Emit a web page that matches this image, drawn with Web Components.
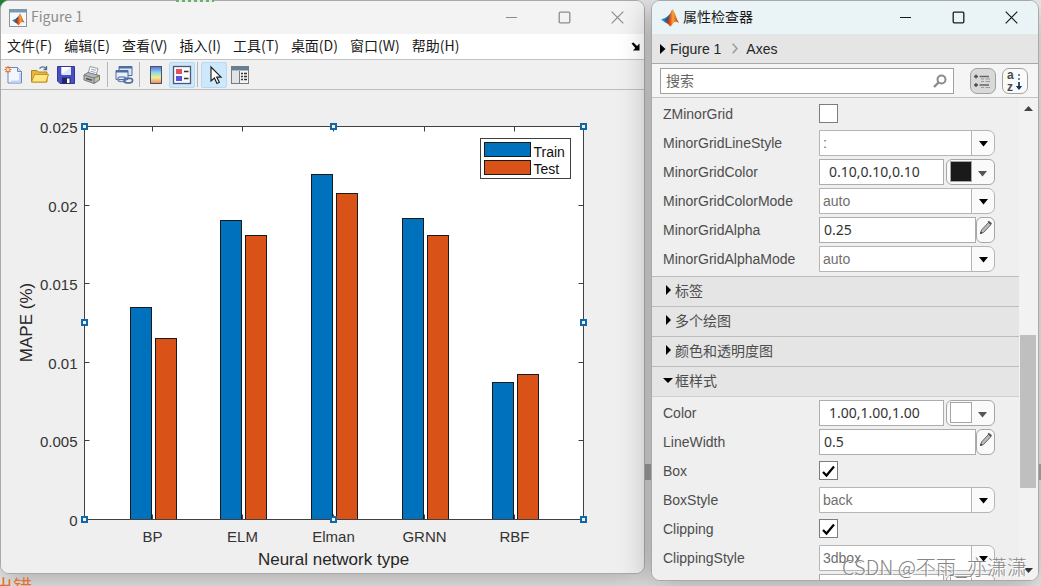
<!DOCTYPE html>
<html lang="zh-CN">
<head>
<meta charset="utf-8">
<meta name="viewport" content="width=device-width, initial-scale=1">
<title>Figure 1</title>
<style>
  html, body { margin: 0; height: 100%; }
  body {
    --ui: "Noto Sans CJK SC", "Noto Sans", sans-serif;
    --plain: "Liberation Sans", "Noto Sans CJK SC", sans-serif;
    font: 14px/20px var(--ui);
    color: #1a1a1a;
  }
</style>
</head>
<body>
<desk-top>
  <app-window class="figure" heading="Figure 1" inactive>
    <matlab-logo slot="icon" framed></matlab-logo>
    <menu-bar items="文件(F)|编辑(E)|查看(V)|插入(I)|工具(T)|桌面(D)|窗口(W)|帮助(H)"></menu-bar>
    <tool-bar></tool-bar>
    <bar-chart></bar-chart>
  </app-window>
  <app-window class="inspector" heading="属性检查器">
    <matlab-logo slot="icon"></matlab-logo>
    <crumb-trail></crumb-trail>
    <search-bar></search-bar>
    <scroll-area>
      <prop-group>
        <prop-row name="ZMinorGrid" kind="check"></prop-row>
        <prop-row name="MinorGridLineStyle" kind="choice" value=":"></prop-row>
        <prop-row name="MinorGridColor" kind="color" value="0.10,0.10,0.10" swatch="#1a1a1a"></prop-row>
        <prop-row name="MinorGridColorMode" kind="choice" value="auto"></prop-row>
        <prop-row name="MinorGridAlpha" kind="number" value="0.25"></prop-row>
        <prop-row name="MinorGridAlphaMode" kind="choice" value="auto"></prop-row>
      </prop-group>
      <prop-header>标签</prop-header>
      <prop-header>多个绘图</prop-header>
      <prop-header>颜色和透明度图</prop-header>
      <prop-header open>框样式</prop-header>
      <prop-group>
        <prop-row name="Color" kind="color" value="1.00,1.00,1.00" swatch="#ffffff"></prop-row>
        <prop-row name="LineWidth" kind="number" value="0.5"></prop-row>
        <prop-row name="Box" kind="check" checked></prop-row>
        <prop-row name="BoxStyle" kind="choice" value="back"></prop-row>
        <prop-row name="Clipping" kind="check" checked></prop-row>
        <prop-row name="ClippingStyle" kind="choice" value="3dbox"></prop-row>
        <prop-row name="" kind="color" value="" swatch="#ffffff"></prop-row>
      </prop-group>
    </scroll-area>
  </app-window>
  <span slot="console">出错，</span>
  <span slot="mark">CSDN @不雨_亦潇潇</span>
</desk-top>

<script>
const define = (name, html, setup) => {
  const tpl = document.createElement('template');
  tpl.innerHTML = html;
  customElements.define(name, class extends HTMLElement {
    constructor() {
      super();
      this.attachShadow({ mode: 'open' }).append(tpl.content.cloneNode(true));
    }
    connectedCallback() {
      if (setup && !this.ready) { this.ready = true; setup(this, this.shadowRoot); }
    }
  });
};

/* Desktop holding both windows, with the editor peeking out behind them */
define('desk-top', `
<style>
  :host {
    display: grid; grid-template-columns: 645fr 388fr; column-gap: 6px;
    box-sizing: border-box; height: 100vh; min-height: 480px; padding-right: 2px;
    position: relative; overflow: hidden; background: #eeeeee;
  }
  ::slotted(.figure) { margin-bottom: 12px; }
  ::slotted(.inspector) { margin-bottom: 5px; }
  .leaf { position: absolute; left: 0; top: 0; width: 10px; height: 10px; background: #23883a; }
  .code { position: absolute; left: 176px; top: 0; width: 38px; height: 2px; background: repeating-linear-gradient(90deg, #6fae6c 0 3px, #e6e6e6 3px 6px); }
  .split { position: absolute; left: 0; right: 0; top: 464px; height: 16px; background: #adadad; }
  .console { position: absolute; left: -6px; top: 574px; font-size: 19px; line-height: 24px; color: #e2702c; white-space: nowrap; }
  .mark { position: absolute; right: 14px; bottom: 7px; font-size: 20px; line-height: 24px; font-weight: 300; color: #858585; text-shadow: 1px 1px 0 #fff; white-space: nowrap; pointer-events: none; z-index: 2; }
</style>
<div class="leaf"></div><div class="split"></div>
<slot></slot>
<div class="console"><slot name="console"></slot></div>
<div class="code"></div>
<div class="mark"><slot name="mark"></slot></div>`);

define('app-window', `
<style>
  :host {
    display: flex; flex-direction: column; min-width: 0; min-height: 0; box-sizing: border-box;
    position: relative; overflow: hidden; border: 1px solid #a9a9a9; border-radius: 9px;
    background: #efefef; box-shadow: 0 8px 32px rgba(0,0,0,.3);
  }
  header { flex: none; height: 33px; display: flex; align-items: center; padding: 0 0 0 9px; background: #eaf4f7; color: #1a1a1a; }
  h1 { flex: 1; margin: 0 0 0 4px; padding-bottom: 3px; font: inherit; }
  button { width: 53px; height: 32px; padding: 0; border: 0; background: none; color: inherit; display: grid; place-items: center; }
  svg { display: block; fill: none; stroke: currentColor; }
  :host([inactive]) header { background: #f3f3f3; color: #8c8c8c; padding-left: 8px; }
</style>
<header>
  <slot name="icon"></slot><h1></h1>
  <button type="button" aria-label="最小化"><svg width="13" height="13"><path d="M1 6.5h11"/></svg></button>
  <button type="button" aria-label="最大化"><svg width="13" height="13"><rect x="1.2" y="1.2" width="10.6" height="10.6" rx="1" stroke-width="1.3"/></svg></button>
  <button type="button" aria-label="关闭"><svg width="13" height="13"><path d="M.7.7l11.6 11.6M12.300 .7L.7 12.300" stroke-width="1.2"/></svg></button>
</header>
<slot></slot>`, (el, root) => { root.querySelector('h1').textContent = el.getAttribute('heading'); });

define('matlab-logo', `
<style>
  :host { display: block; width: 18px; height: 18px; }
  svg { display: block; }
  .frame { display: none; }
  :host([framed]) .frame { display: block; }
  :host([framed]) .peak { transform: translate(3px, 4px) scale(.7); }
</style>
<svg width="18" height="18" viewBox="0 0 18 18" aria-hidden="true">
  <defs><linearGradient id="fire" x1="0" x2="1"><stop offset="0" stop-color="#7c1f1c"/><stop offset=".35" stop-color="#dd5322"/><stop offset=".55" stop-color="#f7a43a"/><stop offset="1" stop-color="#b3301c"/></linearGradient></defs>
  <g class="frame"><rect x=".5" y=".5" width="17" height="17" fill="#f7f9fa" stroke="#8b949b"/><path d="M1 1h16v2.500H1z" fill="#6f9cbc"/></g>
  <g class="peak">
    <path d="M0 10.500l6-2.600c1.500-1 2.300-2.300 3.400-3.600L7 13.500l-2.600.3z" fill="#3f8dc0"/>
    <path d="M3 12l3-4c1.500-1 2.300-2.300 3.400-3.600L7.500 13z" fill="#285a8a"/>
    <path d="M4.500 13.800c2-.6 2.800-3 4-6.600C9.400 4.200 10.300 1 11.500.6c1.600 0 3.500 8.400 6.500 13.600-2.300-2-4.600-2-6 .3-.9 1.500-1.800 2.700-3 3C8 16 6.700 14.300 4.500 13.800z" fill="url(#fire)"/>
  </g>
</svg>`);

define('menu-bar', `
<style>
  :host { display: flex; flex: none; align-items: center; height: 25px; background: #fff; border-bottom: 1px solid #c3c3c3; padding: 0 4px 0 6px; }
  nav { display: flex; flex: 1; gap: 12px; padding-bottom: 3px; }
  nav button { white-space: nowrap; }
  button { font: inherit; color: #1a1a1a; border: 0; padding: 0; background: none; }
  svg { display: block; }
</style>
<nav></nav>
<button type="button" aria-label="停靠"><svg width="9" height="9" viewBox="0 0 9 9"><path d="M.5 1.500l2-1L6 4l2.500-2.500V8.500H2L4.300 6z" fill="#000"/></svg></button>`,
(el, root) => {
  root.querySelector('nav').append(...el.getAttribute('items').split('|').map(text => {
    const b = document.createElement('button'); b.type = 'button'; b.textContent = text; return b;
  }));
});

define('tool-bar', `
<style>
  :host { display: flex; flex: none; align-items: center; height: 29px; border-bottom: 1px solid #bdbdbd; background: #f0f0f0; }
  button { width: 26px; height: 26px; padding: 0; border: 1px solid transparent; border-radius: 2px; background: none; display: grid; place-items: center; }
  button[aria-pressed=true] { background: #cde8fb; border-color: #b3dbf7; }
  i { width: 1px; height: 25px; margin: 0 3px 0 2px; background: #b5b5b5; }
  svg { display: block; }
</style>
<button type="button" aria-label="新建图窗"><svg width="20" height="20" viewBox="0 0 20 20"><path d="M4 2.500h9.500l4 4v11.500H4z" fill="#f2f7ff" stroke="#7087b4"/><path d="M13.500 2.500v4h4" fill="#cddcf5" stroke="#7087b4"/><path d="M16 8v8.500H7" fill="none" stroke="#c3d5f1" stroke-width="2"/><path d="M4 1v7M.5 4.500h7M1.500 2l5 5M6.500 2l-5 5" stroke="#d9713d" stroke-width="1.200"/><circle cx="4" cy="4.500" r="1.500" fill="#ffe0a0"/></svg></button>
<button type="button" aria-label="打开文件"><svg width="20" height="20" viewBox="0 0 20 20"><path d="M1.500 17V5.500h5.500l1.500 1.500h8.500V17z" fill="#e5b73c" stroke="#b38422"/><path d="M1.500 17l3-7.500h14l-2.500 7.500z" fill="#ffe681" stroke="#c39426"/><path d="M9.500 3.500c2-2 4.500-2 6.500 0M16.500 1v3.500h-3" fill="none" stroke="#53708e" stroke-width="1.300"/></svg></button>
<button type="button" aria-label="保存图窗"><svg width="20" height="20" viewBox="0 0 20 20"><path d="M1.500 1.500h17v17H4L1.500 16z" fill="#4a50c4" stroke="#343795"/><path d="M5.500 2h9.500v8H5.500z" fill="#dce9fb"/><path d="M5.500 2H15L5.500 9z" fill="#fff"/><path d="M6 12.500h8.500v6H6z" fill="#23265e"/><path d="M11 13.500h2.500v4.500H11z" fill="#fff"/></svg></button>
<button type="button" aria-label="打印图窗"><svg width="20" height="20" viewBox="0 0 20 20"><path d="M6 9l2-7.500 8 2-2 7" fill="#fff" stroke="#999"/><path d="M9 4l5 1.300M8.500 6.200l5 1.300" stroke="#8fa3bd"/><path d="M2 10l4-2.500 11.500 3V15L12 18.500 2 15z" fill="#b9b9b9" stroke="#777"/><path d="M2 10l10 3 5.500-2.500M12 13v5.500" fill="none" stroke="#777"/><path d="M4 13.500l6 1.800" stroke="#4f4f4f" stroke-width="1.500"/><circle cx="15" cy="14" r="1" fill="#e3c44c"/></svg></button>
<i></i>
<button type="button" aria-label="链接绘图"><svg width="20" height="20" viewBox="0 0 20 20"><path d="M5 1.500h13v9H5z" fill="#dbe6f5" stroke="#4e6c9d"/><path d="M5 2.500h13" stroke="#4e6c9d" stroke-width="2"/><path d="M2 5.500h12v9H2z" fill="#e8effa" stroke="#4e6c9d"/><path d="M2 6.500h12" stroke="#4e6c9d" stroke-width="2"/><rect x="4" y="12" width="8" height="4.500" rx="2.200" fill="none" stroke="#7590b9" stroke-width="1.700"/><rect x="10" y="13.300" width="8.500" height="4.500" rx="2.200" fill="none" stroke="#52719f" stroke-width="1.700"/></svg></button>
<i></i>
<button type="button" aria-label="插入颜色栏"><svg width="20" height="20" viewBox="0 0 20 20"><defs><linearGradient id="bar" x2="0" y2="1"><stop stop-color="#5d68d8"/><stop offset=".35" stop-color="#87dce9"/><stop offset=".65" stop-color="#f5ec91"/><stop offset="1" stop-color="#ef8760"/></linearGradient></defs><rect x="4.500" y="1.500" width="11" height="17" fill="url(#bar)" stroke="#48536b"/></svg></button>
<button type="button" aria-label="插入图例" aria-pressed="true"><svg width="20" height="20" viewBox="0 0 20 20"><rect x="1.500" y="1.500" width="17" height="17" fill="#fafafa" stroke="#4a5975" stroke-width="1.300"/><path d="M4 4h6v5H4z" fill="#e0525d"/><path d="M4 11h6v5H4z" fill="#5753df"/><path d="M12 6.500h4.500M12 13.500h4.500" stroke="#333" stroke-width="1.500"/></svg></button>
<i></i>
<button type="button" aria-label="编辑绘图" aria-pressed="true"><svg width="20" height="20" viewBox="0 0 20 20"><path d="M7 2v14l3.400-3 2.600 5.500 2.300-1.200-2.600-5.200H17z" fill="#fff" stroke="#222" stroke-width="1.200"/></svg></button>
<button type="button" aria-label="属性检查器"><svg width="20" height="20" viewBox="0 0 20 20"><rect x="1.500" y="1.500" width="17" height="17" fill="#f5f5f5" stroke="#7a7a7a"/><path d="M2 2h16v3.500H2z" fill="#62809a"/><path d="M2 6h7v12H2z" fill="#e1e3e4"/><path d="M9.500 6v12" stroke="#7a7a7a"/><path d="M11 8.500h2M14 8.500h3M11 11.500h2M14 11.500h3M11 14.500h2M14 14.500h3" stroke="#333" stroke-width="1.300"/></svg></button>`);

/* Grouped bar chart; scales with its window */
define('bar-chart', `
<style>
  :host { display: block; flex: 1; min-height: 0; background: #efefef; }
  svg { display: block; width: 100%; height: 100%; font-family: var(--plain); }
  .axis { stroke: #404040; fill: none; }
  .bar { stroke: #1a1a1a; }
  .tick { font-size: 15px; fill: #333; }
  .label { font-size: 17px; fill: #262626; text-anchor: middle; }
  .key { font-size: 14px; fill: #111; }
  .handle { fill: #e8f3fb; stroke: #1467a5; stroke-width: 2; }
</style>
<svg viewBox="0 0 643 483" role="img" aria-label="MAPE (%)"></svg>`, (el, root) => {
  const left = 83, right = 582, top = 37, bottom = 430, yMax = 0.025;
  const blue = '#0072bd', red = '#d95319';
  const data = [['BP', .0135, .0115], ['ELM', .019, .01805], ['Elman', .02195, .02074], ['GRNN', .01915, .01805], ['RBF', .0087, .0092]];
  const yOf = v => Math.round(bottom - v / yMax * (bottom - top));
  const xOf = i => Math.floor(left + (i + .75) * (right - left) / 5.5);
  const rect = (c, x, y, w, h, fill) => `<rect class="${c}" x="${x}" y="${y}" width="${w}" height="${h}"${fill ? ` fill="${fill}"` : ''}/>`;
  let s = `<rect x="${left}" y="${top}" width="${right - left}" height="${bottom - top}" fill="#fff"/><g transform="translate(.5 -.5)">`;
  data.forEach(([name, a, b], i) => {
    const x = xOf(i);
    s += `<path class="axis" d="M${x} ${bottom}v-5M${x} ${top}v5"/>`;
    s += rect('bar', x - 22, yOf(a), 21, bottom - yOf(a), blue) + rect('bar', x + 3, yOf(b), 21, bottom - yOf(b), red);
    s += `<text class="tick" text-anchor="middle" x="${x}" y="452">${name}</text>`;
  });
  ['0', '0.005', '0.01', '0.015', '0.02', '0.025'].forEach(t => {
    const y = yOf(+t);
    s += `<path class="axis" d="M${left} ${y}h5M${right} ${y}h-5"/><text class="tick" text-anchor="end" x="76" y="${y + 6}">${t}</text>`;
  });
  s += `<path class="axis" d="M${left} ${top}H${right}V${bottom}H${left}z"/>`;
  s += `<rect class="axis" x="479" y="49" width="90" height="40" style="fill:#fff"/>`;
  s += rect('bar', 483, 53, 46, 14, blue) + rect('bar', 483, 71, 46, 14, red);
  s += `<text class="key" x="532" y="67">Train</text><text class="key" x="532" y="84">Test</text>`;
  s += `<text class="label" x="332" y="475">Neural network type</text>`;
  s += `<text class="label" transform="translate(30 233) rotate(-90)">MAPE (%)</text>`;
  const mx = Math.floor((left + right) / 2), my = Math.floor((top + bottom) / 2);
  [[left, top], [mx, top], [right, top], [left, my], [right, my], [left, bottom], [mx, bottom], [right, bottom]]
    .forEach(([x, y]) => { s += rect('handle', x - 2.5, y - 2.5, 5, 5); });
  root.querySelector('svg').innerHTML = s + '</g>';
});

define('crumb-trail', `
<style>
  :host { display: block; flex: none; background: #e5e5e5; border-bottom: 1px solid #a8a8a8; font-family: var(--plain); }
  nav { display: flex; align-items: center; height: 29px; padding-left: 8px; }
  a { color: #262626; text-decoration: none; }
  svg { display: block; }
  .play { margin-right: 4px; } .next { margin: 0 8px 0 11px; }
</style>
<nav>
  <svg class="play" width="6" height="10"><path d="M0 0l5.500 5L0 10z"/></svg>
  <a href="#figure">Figure 1</a>
  <svg class="next" width="6" height="11"><path d="M.7.7L5 5.500.7 10.300" fill="none" stroke="#999" stroke-width="1.500"/></svg>
  <a href="#axes">Axes</a>
</nav>`);

define('search-bar', `
<style>
  :host { display: flex; flex: none; align-items: center; gap: 6px; height: 33px; padding: 0 10px 0 8px; background: #f5f5f5; border-bottom: 1px solid #c4c4c4; }
  label { flex: 1; min-width: 0; display: flex; align-items: center; box-sizing: border-box; height: 26px; margin-right: 10px; padding: 0 6px 0 5px; border: 1px solid #a0a0a0; background: #fff; }
  input { flex: 1; min-width: 0; height: 24px; padding: 0 0 2px; box-sizing: border-box; border: 0; outline: 0; background: none; font: inherit; }
  input::placeholder { color: #666; opacity: 1; }
  button { box-sizing: border-box; width: 26px; height: 26px; padding: 0; border: 1px solid #a0a0a0; border-radius: 7px; background: #fafafa; display: grid; place-items: center; }
  button[aria-pressed=true] { background: #d9d9d9; }
  svg { display: block; }
  text { font: 700 12px var(--plain); fill: #4a4a4a; }
</style>
<label><input type="text" placeholder="搜索" aria-label="搜索"><svg width="14" height="14" viewBox="0 0 14 14" fill="none" stroke="#8b8b8b"><circle cx="8.500" cy="5.500" r="4" stroke-width="2"/><path d="M5.500 8.500L1 13" stroke-width="2.400"/></svg></label>
<button type="button" aria-label="分组" aria-pressed="true"><svg width="20" height="20" viewBox="0 0 20 20"><path d="M1 5.500h4M3 3.500v4M1 14h4M3 12v4" stroke="#444" stroke-width="1.300"/><path d="M6.500 5.500H16M6.500 14H16" stroke="#666" stroke-width="1.500"/><path d="M8 8h3M12.500 8H17M8 10.500h3M12.500 10.500H17M8 16.500h3M12.500 16.500H17" stroke="#999"/></svg></button>
<button type="button" aria-label="按字母排序"><svg width="22" height="24" viewBox="0 0 22 24"><text x="3" y="10">a</text><text x="3" y="22">z</text><path d="M15 5v2M15 9v2" stroke="#3c608c" stroke-width="1.500"/><path d="M15 13v5" stroke="#12365f" stroke-width="1.700"/><path d="M11.800 17h6.400L15 21z" fill="#12365f"/></svg></button>`);

/* Scrolling property list with its own rail */
define('scroll-area', `
<style>
  :host { display: grid; grid-template-columns: minmax(0, 1fr) 19px; flex: 1; min-height: 0; background: #efefef; }
  .view { overflow-y: auto; scrollbar-width: none; min-height: 0; }
  .rail { display: flex; flex-direction: column; align-items: center; padding: 8px 2px 7px 1px; background: #f2f2f2; }
  .above { flex: 222; } .thumb { flex: 152; width: 100%; background: #bfbfbf; } .below { flex: 79; }
  svg { display: block; }
</style>
<div class="view"><slot></slot></div>
<div class="rail" aria-hidden="true">
  <svg width="9" height="5"><path d="M0 5l4.500-5L9 5z" fill="#444"/></svg>
  <div class="above"></div><div class="thumb"></div><div class="below"></div>
  <svg width="9" height="5"><path d="M0 0h9L4.500 5z" fill="#333"/></svg>
</div>`);

define('prop-group', `<style>:host { display: block; padding: 1px 0 3px; }</style><slot></slot>`);

define('prop-header', `
<style>
  :host { display: block; height: 29px; border-top: 1px solid #bcbcbc; background: #e5e5e5; }
  button { display: flex; align-items: center; gap: 2px; width: 100%; height: 28px; padding: 0 0 2px 11px; border: 0; background: none; font: inherit; color: #4d4d4d; }
  svg { display: block; width: 10px; height: 10px; }
  :host([open]) { border-bottom: 1px solid #cfcfcf; }
  :host([open]) svg { transform: rotate(90deg); }
</style>
<button type="button"><svg viewBox="0 0 10 10"><path d="M3 0l5 5-5 5z" fill="#000"/></svg><slot></slot></button>`,
(el, root) => { root.querySelector('button').setAttribute('aria-expanded', el.hasAttribute('open')); });

const arrow = '<svg class="arrow" width="9" height="6"><path d="M0 0h9L4.500 5.500z"/></svg>';
const controls = {
  check: el => `<input id="c" type="checkbox"${el.hasAttribute('checked') ? ' checked' : ''}>`,
  choice: el => `<div class="choice"><select id="c"><option>${el.getAttribute('value')}</option></select>${arrow}</div>`,
  number: el => `<input id="c" type="text" value="${el.getAttribute('value')}"><button type="button" class="edit" aria-label="编辑"><svg width="14" height="16" viewBox="0 0 14 16"><path d="M1.500 13.500l1-3.500L9.500 2.500l2.500 2-7.500 8z" fill="#bbb" stroke="#666"/><path d="M8.500 2l1.300-1.200 3.200 2.400L11.800 4.700z" fill="#555"/><path d="M1 14l.8-2.500 1.700 1.500z" fill="#333"/></svg></button>`,
  color: el => `<input id="c" class="rgb" type="text" value="${el.getAttribute('value')}"><button type="button" class="pick" aria-label="选择颜色"><span style="background:${el.getAttribute('swatch')}"></span>${arrow}</button>`
};
define('prop-row', `
<style>
  :host { display: grid; grid-template-columns: 156px minmax(0, 1fr); align-items: center; height: 29px; padding: 0 24px 0 11px; font-family: var(--plain); color: #4d4d4d; }
  .field { display: flex; align-items: center; min-width: 0; }
  input, select, button { box-sizing: border-box; margin: 0; }
  input[type=text] { flex: 1; min-width: 0; height: 26px; padding: 0 4px; border: 1px solid #adadad; background: #fff; font: 14px/20px "Noto Sans", sans-serif; color: #333; }
  input.rgb { padding: 0 9px; margin-right: 2px; }
  input[type=checkbox] { appearance: none; width: 19px; height: 19px; border: 1px solid #7d7d7d; background: #fff; }
  input[type=checkbox]:checked { background: #fff url("data:image/svg+xml,%3Csvg xmlns='http://www.w3.org/2000/svg' viewBox='0 0 17 17'%3E%3Cpath d='M3 10l3.500 3.500L14 4.500' fill='none' stroke='%23000' stroke-width='2.200'/%3E%3C/svg%3E"); }
  .choice { position: relative; flex: 1; min-width: 0; }
  select { display: block; appearance: none; width: 100%; height: 26px; padding: 0 28px 0 3px; border: 1px solid #b5b5b5; border-radius: 0 7px 7px 0; background: linear-gradient(90deg, #b5b5b5 1px, #fafafa 1px) right / 23px 100% no-repeat #fff; font: inherit; color: #707070; }
  .choice .arrow { position: absolute; right: 7px; top: 11px; pointer-events: none; fill: #000; }
  button { height: 26px; padding: 0; border: 1px solid #a6a6a6; background: #fafafa; display: flex; align-items: center; }
  .edit { width: 19px; border-radius: 6px; justify-content: center; padding-bottom: 4px; }
  .pick { width: 49px; border-radius: 6px; padding: 0 7px 0 3px; justify-content: space-between; }
  .pick span { box-sizing: border-box; width: 22px; height: 21px; border: 1px solid #a6a6a6; }
  .pick .arrow { fill: #555; margin-top: 4px; }
</style>
<label for="c"></label><div class="field"></div>`, (el, root) => {
  const name = el.getAttribute('name');
  root.querySelector('label').textContent = name;
  root.querySelector('.field').innerHTML = controls[el.getAttribute('kind')](el);
  if (!name) root.querySelector('#c').setAttribute('aria-label', '颜色');
});
</script>
</body>
</html>
